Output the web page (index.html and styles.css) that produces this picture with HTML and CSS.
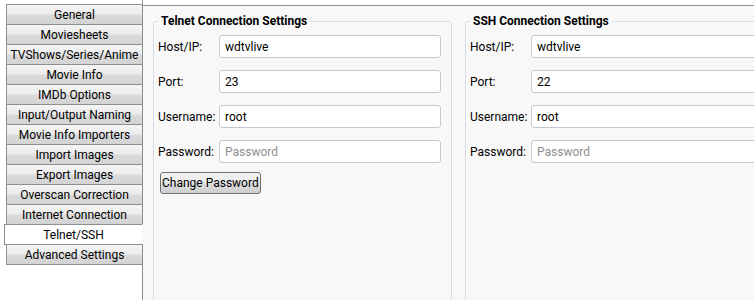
FILE: index.html
```html
<!DOCTYPE html>
<html>
<head>
    <title>Settings - Telnet/SSH</title>
    <link rel="stylesheet" href="styles.css">
</head>
<body>
    <div class="window">
        <div class="tabs">
            <div class="tab">General</div>
            <div class="tab">Moviesheets</div>
            <div class="tab">TVShows/Series/Anime</div>
            <div class="tab">Movie Info</div>
            <div class="tab">IMDb Options</div>
            <div class="tab">Input/Output Naming</div>
            <div class="tab">Movie Info Importers</div>
            <div class="tab">Import Images</div>
            <div class="tab">Export Images</div>
            <div class="tab">Overscan Correction</div>
            <div class="tab">Internet Connection</div>
            <div class="tab selected">Telnet/SSH</div>
            <div class="tab">Advanced Settings</div>
        </div>
        <div class="panel">
            <fieldset class="group">
                <legend>Telnet Connection Settings</legend>
                <div class="form-row">
                    <label for="telnet-host">Host/IP:</label>
                    <input type="text" id="telnet-host" value="wdtvlive" />
                </div>
                <div class="form-row">
                    <label for="telnet-port">Port:</label>
                    <input type="text" id="telnet-port" value="23" />
                </div>
                <div class="form-row">
                    <label for="telnet-user">Username:</label>
                    <input type="text" id="telnet-user" value="root" />
                </div>
                <div class="form-row">
                    <label for="telnet-pass">Password:</label>
                    <input type="password" id="telnet-pass" placeholder="Password" />
                </div>
                <button type="button">Change Password</button>
            </fieldset>
            <fieldset class="group wide">
                <legend>SSH Connection Settings</legend>
                <div class="form-row">
                    <label for="ssh-host">Host/IP:</label>
                    <input type="text" id="ssh-host" value="wdtvlive" />
                </div>
                <div class="form-row">
                    <label for="ssh-port">Port:</label>
                    <input type="text" id="ssh-port" value="22" />
                </div>
                <div class="form-row">
                    <label for="ssh-user">Username:</label>
                    <input type="text" id="ssh-user" value="root" />
                </div>
                <div class="form-row">
                    <label for="ssh-pass">Password:</label>
                    <input type="password" id="ssh-pass" placeholder="Password" />
                </div>
            </fieldset>
        </div>
    </div>
</body>
</html>
```

FILE: styles.css
```css
body {
    margin: 0;
    font-family: Roboto, "Noto Sans", sans-serif;
    font-size: 12px;
    color: #000;
    background-color: #fff;
    overflow: hidden;
}

.window {
    display: flex;
    height: 300px;
}

.tabs {
    flex-shrink: 0;
    width: 136px;
    margin-left: 6px;
    padding-top: 4px;
    border-right: 1px solid #8e8f8f;
}

.tab {
    height: 19px;
    line-height: 20px;
    margin-right: -1px;
    margin-bottom: -1px;
    border: 1px solid #8e8f8f;
    text-align: center;
    white-space: nowrap;
    background: linear-gradient(#f4f4f4, #ececec 45%, #dadada 55%, #d3d3d3);
}

.tab.selected {
    margin-left: -2px;
    background: #fff;
    border-right-color: #fff;
}

.panel {
    flex: 1;
    min-width: 0;
    display: flex;
    gap: 13px;
    margin-top: 5px;
    padding: 8px 0 0 10px;
    border-top: 1px solid #8e8f8f;
    background-color: #f8f8f8;
    overflow: hidden;
}

.group {
    flex-shrink: 0;
    width: 283px;
    margin: 0 0 -10px 0;
    padding: 7px 10px 0 4px;
    border: 1px solid #d5dfe5;
    border-radius: 3px;
}

.group.wide {
    width: 320px;
}

legend {
    padding: 0 3px;
    font-weight: bold;
}

.form-row {
    display: flex;
    align-items: center;
    margin-bottom: 12px;
}

label {
    width: 61px;
    flex-shrink: 0;
}

input[type="text"],
input[type="password"] {
    flex: 1;
    min-width: 0;
    height: 23px;
    padding: 0 5px;
    border: 1px solid #c5c9cf;
    border-radius: 3px;
    box-sizing: border-box;
    font-family: inherit;
    font-size: 12px;
    background-color: #fff;
}

input::placeholder {
    color: #8f8f8f;
}

button {
    margin: -3px 0 0 2px;
    height: 22px;
    padding: 0 1px;
    border: 1px solid #707070;
    border-radius: 3px;
    font-family: inherit;
    font-size: 12px;
    color: #000;
    background: linear-gradient(#f2f2f2, #ebebeb 50%, #dddddd 51%, #cfcfcf);
    cursor: pointer;
}
```
